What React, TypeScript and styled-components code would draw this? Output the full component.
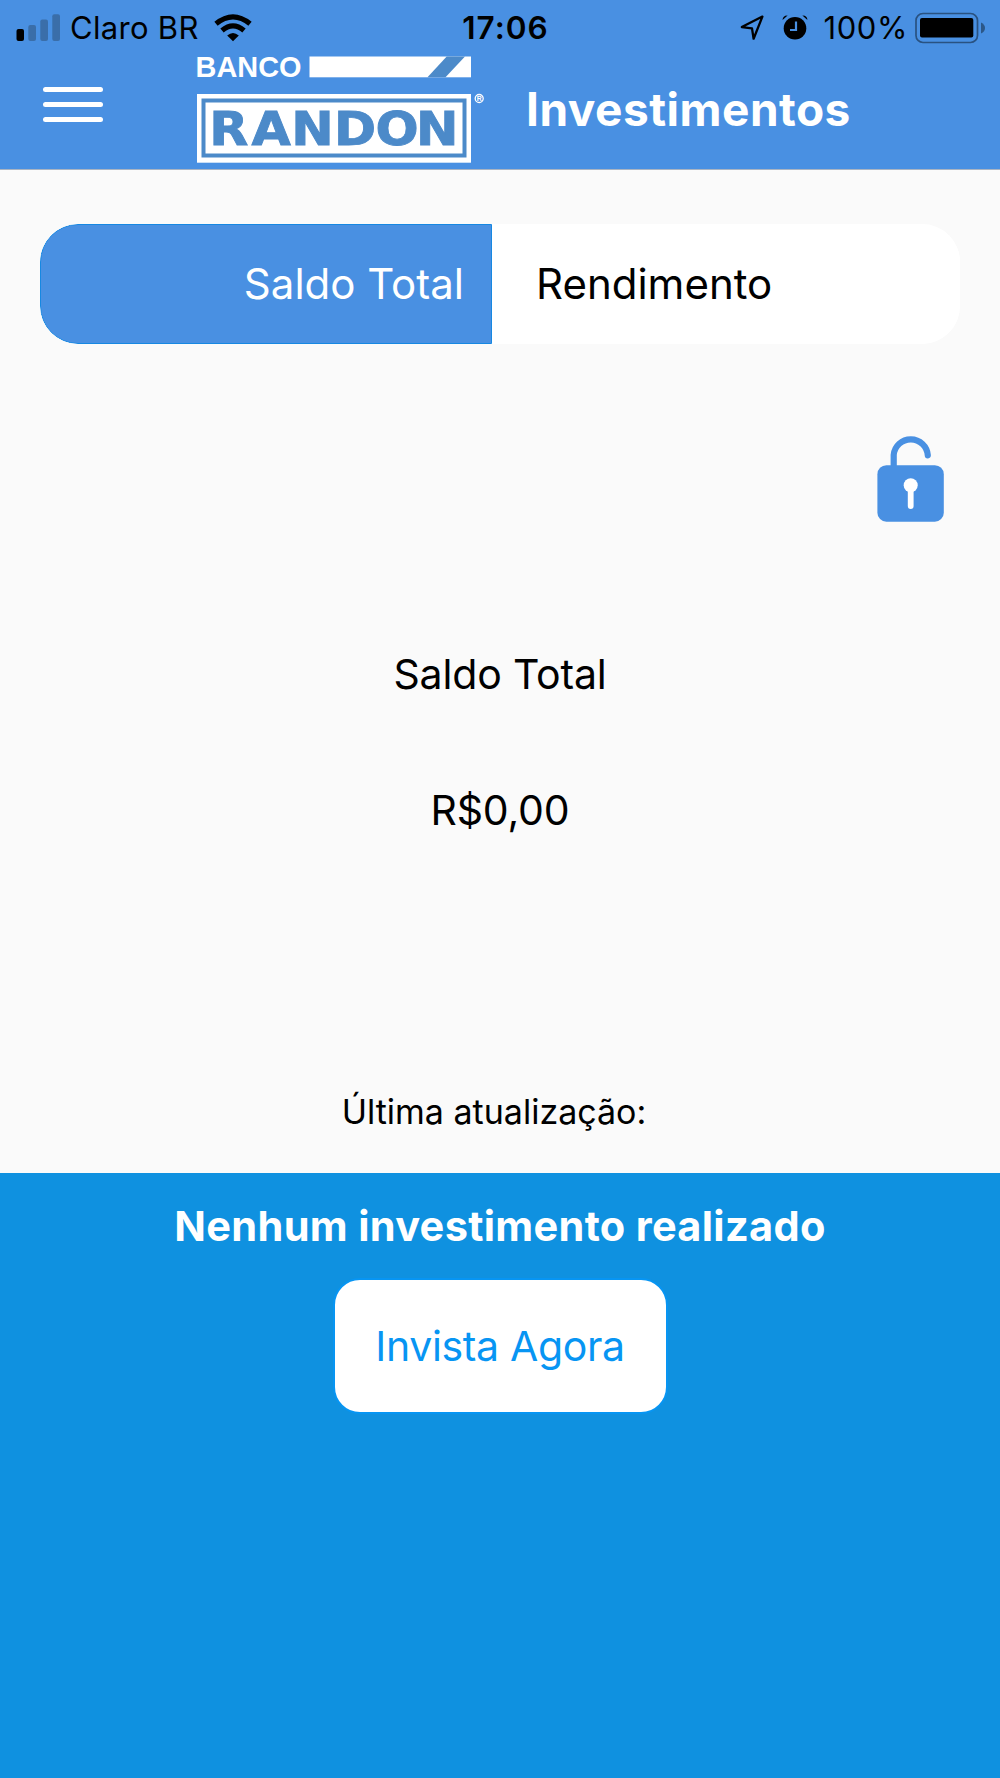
import React from "react";
import styled, { createGlobalStyle } from "styled-components";

const colors = {
  header: "#4990e2",
  panel: "#0f91e0",
  accent: "#0795f3",
  page: "#fafafa",
  logo: "#4c8ac9",
};

const GlobalStyle = createGlobalStyle`
  *, *::before, *::after { box-sizing: border-box; }
  body {
    margin: 0;
    background: ${colors.page};
    font-family: Inter, "Liberation Sans", sans-serif;
    color: #000;
  }
  button { font-family: inherit; cursor: pointer; }
`;

const Screen = styled.div`
  width: 1000px;
  height: 1778px;
  display: flex;
  flex-direction: column;
  overflow: hidden;
  background: ${colors.page};
`;

const Header = styled.header`
  height: 170px;
  flex: none;
  background: ${colors.header};
  border-bottom: 1px solid #a9b4c3;
`;

const StatusBar = styled.div`
  height: 54px;
  padding: 1px 14px 0 16px;
  display: grid;
  grid-template-columns: 1fr auto 1fr;
  align-items: center;
`;

const StatusGroup = styled.div<{ $end?: boolean }>`
  display: flex;
  align-items: center;
  justify-content: ${(p) => (p.$end ? "flex-end" : "flex-start")};
`;

const Label = styled.span<{ $size: number; $weight?: number; $spacing?: number }>`
  font-size: ${(p) => p.$size}px;
  font-weight: ${(p) => p.$weight ?? 400};
  letter-spacing: ${(p) => p.$spacing ?? 0}px;
  line-height: 1.2;
  white-space: nowrap;
`;

const Carrier = styled(Label)`
  margin: 0 15px 0 8px;
`;

const Clock = styled(Label)`
  margin-left: 9px;
`;

const Charge = styled(Label)`
  margin: 0 7px 0 15px;
`;

const Icon = styled.svg`
  display: block;
  flex: none;
`;

const AlarmIcon = styled(Icon)`
  margin-left: 18px;
`;

const NavBar = styled.div`
  height: 115px;
  display: flex;
  align-items: flex-start;
`;

const MenuButton = styled.button`
  width: 60px;
  margin: 33px 0 0 43px;
  padding: 0;
  border: 0;
  background: none;
  display: flex;
  flex-direction: column;
  gap: 10px;
`;

const MenuLine = styled.span`
  height: 5px;
  border-radius: 3px;
  background: #fff;
`;

const Logo = styled(Icon)`
  margin-left: 89px;
  overflow: visible;
`;

const Title = styled.h1`
  margin: 27px 0 0 31px;
  font-size: 46px;
  line-height: 56px;
  font-weight: 650;
  letter-spacing: 0.5px;
  color: #fff;
`;

const Content = styled.main`
  height: 1003px;
  flex: none;
  padding: 54px 40px 0;
  display: flex;
  flex-direction: column;
`;

const Segments = styled.div`
  height: 120px;
  flex: none;
  display: flex;
  border-radius: 38px;
  overflow: hidden;
  background: #fff;
`;

const Segment = styled.button<{ $active?: boolean }>`
  width: ${(p) => (p.$active ? "452px" : "468px")};
  padding: ${(p) => (p.$active ? "0 27px 0 0" : "0 0 0 44px")};
  text-align: ${(p) => (p.$active ? "right" : "left")};
  border: ${(p) => (p.$active ? "1px solid #1688e2" : "0")};
  border-radius: ${(p) => (p.$active ? "38px 0 0 38px" : "0")};
  background: ${(p) => (p.$active ? colors.header : "#fff")};
  color: ${(p) => (p.$active ? "#fff" : "#000")};
`;

const LockButton = styled.button`
  align-self: flex-end;
  margin: 90px 15px 0 0;
  padding: 0;
  border: 0;
  background: none;
`;

const Balance = styled.section`
  margin-top: 122px;
  display: flex;
  flex-direction: column;
  align-items: center;
`;

const BalanceText = styled.p`
  margin: 0 0 76px;
  font-size: 41px;
  line-height: 60px;
  font-weight: 380;
  letter-spacing: -0.15px;
`;

const Updated = styled.p`
  margin: 176px 12px 0 0;
  text-align: center;
  font-size: 34px;
  line-height: 40px;
  font-weight: 380;
`;

const InvestPanel = styled.section`
  flex: 1;
  background: ${colors.panel};
  display: flex;
  flex-direction: column;
  align-items: center;
`;

const PanelTitle = styled.h2`
  margin: 28px 0 0;
  font-size: 41.5px;
  line-height: 50px;
  font-weight: 650;
  letter-spacing: 0.32px;
  color: #fff;
`;

const InvestButton = styled.button`
  width: 335px;
  height: 136px;
  margin-top: 27px;
  padding: 2px 0 0;
  border: 2px solid ${colors.accent};
  border-radius: 27px;
  background: #fff;
  color: ${colors.accent};
`;

const SignalIcon = () => (
  <Icon width="46" height="28" viewBox="0 0 46 28">
    <rect x="0.5" y="15" width="7.5" height="12" rx="2" fill="#000" />
    <g fill="#3a6ea9">
      <rect x="12.3" y="11" width="7.7" height="16" rx="2" />
      <rect x="24.3" y="5.5" width="7.7" height="21.5" rx="2" />
      <rect x="36.3" y="0.3" width="7.7" height="26.7" rx="2" />
    </g>
  </Icon>
);

const WifiIcon = () => (
  <Icon width="38" height="28" viewBox="0 0 38 28">
    <g fill="none" stroke="#000" strokeWidth="5.2">
      <path d="M2 9.8 Q19 -4 36 9.8" />
      <path d="M8 16.5 Q19 7.2 30 16.5" />
    </g>
    <path d="M13.2 21.5 Q19 16.4 24.8 21.5 L19 27.3 Z" fill="#000" />
  </Icon>
);

const LocationIcon = () => (
  <Icon width="24" height="26" viewBox="0 0 24 26">
    <path
      d="M22.4 1.6 L1.8 12.1 L12 13.4 L13.6 23.7 Z"
      fill="none"
      stroke="#000"
      strokeWidth="2.3"
      strokeLinejoin="round"
    />
  </Icon>
);

const AlarmClock = () => (
  <AlarmIcon width="26" height="26" viewBox="0 0 26 26">
    <circle cx="13" cy="13.3" r="11.3" fill="#000" />
    <path d="M0.6 5 Q0.8 0.2 5.6 0.4 Z" fill="#000" />
    <path d="M20.4 0.4 Q25.2 0.2 25.4 5 Z" fill="#000" />
    <path d="M14 6.5 V15 H8" fill="none" stroke={colors.header} strokeWidth="2.2" />
  </AlarmIcon>
);

const BatteryIcon = () => (
  <Icon width="71" height="32" viewBox="0 0 71 32">
    <rect x="1" y="1.5" width="61.5" height="29" rx="7" fill="none" stroke="#295281" strokeWidth="1.7" />
    <rect x="5" y="6" width="53.3" height="19.6" rx="2" fill="#000" />
    <path d="M66 10.5 Q70 12.5 70 16 Q70 19.5 66 21.5 Z" fill="#2b5788" />
  </Icon>
);

const BrandLogo = () => (
  <Logo width="303" height="116" viewBox="192 54 303 116">
    <text
      x="195.5"
      y="77"
      fontFamily="Liberation Sans, Arial, sans-serif"
      fontWeight="700"
      fontSize="29.5"
      textLength="106"
      lengthAdjust="spacingAndGlyphs"
      fill="#fff"
    >
      BANCO
    </text>
    <rect x="309.5" y="56.5" width="161.5" height="20.8" fill="#fff" />
    <path d="M446.7 56.5 H465 L445.5 77.3 H427.5 Z" fill={colors.logo} />
    <rect x="197" y="94" width="274" height="68.7" fill="#fff" />
    <rect x="203.5" y="100.5" width="261" height="55" fill="none" stroke={colors.logo} strokeWidth="4" />
    <g transform="scale(1.08 1)">
      <text
        x="193.8 232.8 269.6 309.2 347.8 385.2"
        y="145.3"
        fontFamily="DejaVu Sans, sans-serif"
        fontWeight="700"
        fontSize="47"
        fill={colors.logo}
        stroke={colors.logo}
        strokeWidth="0.9"
      >
        RANDON
      </text>
    </g>
    <circle cx="479.2" cy="98.5" r="4" fill="none" stroke="#fff" strokeWidth="1.3" />
    <text
      x="479.2"
      y="101"
      textAnchor="middle"
      fontFamily="Liberation Sans, Arial, sans-serif"
      fontWeight="700"
      fontSize="7"
      fill="#fff"
    >
      R
    </text>
  </Logo>
);

const UnlockedIcon = () => (
  <Icon width="68" height="88" viewBox="877 434 68 88">
    <path
      d="M893.7 468 V455 A17.1 17.1 0 0 1 927.8 455.3"
      fill="none"
      stroke={colors.header}
      strokeWidth="6.2"
      strokeLinecap="round"
    />
    <rect x="877.4" y="465.2" width="66.4" height="56.5" rx="9" fill={colors.header} />
    <circle cx="910.7" cy="485.3" r="7" fill="#fff" />
    <path d="M910.7 486 V506" stroke="#fff" strokeWidth="5.8" strokeLinecap="round" />
  </Icon>
);

export default function App() {
  return (
    <>
      <GlobalStyle />
      <Screen>
        <Header>
          <StatusBar>
            <StatusGroup>
              <SignalIcon />
              <Carrier $size={31} $spacing={0.3}>Claro BR</Carrier>
              <WifiIcon />
            </StatusGroup>
            <Clock $size={31.5} $weight={600} $spacing={1}>17:06</Clock>
            <StatusGroup $end>
              <LocationIcon />
              <AlarmClock />
              <Charge $size={31} $spacing={0.6}>100%</Charge>
              <BatteryIcon />
            </StatusGroup>
          </StatusBar>
          <NavBar>
            <MenuButton aria-label="Menu">
              <MenuLine />
              <MenuLine />
              <MenuLine />
            </MenuButton>
            <BrandLogo />
            <Title>Investimentos</Title>
          </NavBar>
        </Header>
        <Content>
          <Segments>
            <Segment $active>
              <Label $size={42} $weight={380}>Saldo Total</Label>
            </Segment>
            <Segment>
              <Label $size={42} $weight={380}>Rendimento</Label>
            </Segment>
          </Segments>
          <LockButton aria-label="Ocultar saldo">
            <UnlockedIcon />
          </LockButton>
          <Balance>
            <BalanceText>Saldo Total</BalanceText>
            <BalanceText>R$0,00</BalanceText>
          </Balance>
          <Updated>Última atualização:</Updated>
        </Content>
        <InvestPanel>
          <PanelTitle>Nenhum investimento realizado</PanelTitle>
          <InvestButton>
            <Label $size={41} $weight={380} $spacing={-0.35}>Invista Agora</Label>
          </InvestButton>
        </InvestPanel>
      </Screen>
    </>
  );
}
